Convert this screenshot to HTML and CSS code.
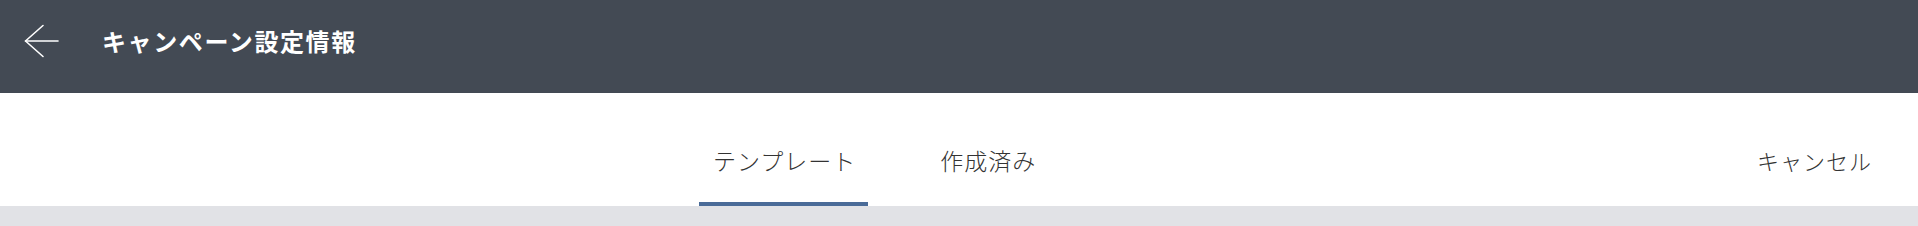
FILE: index.html
```html
<!DOCTYPE html>
<html lang="ja">
<head>
    <meta charset="UTF-8">
    <meta name="viewport" content="width=device-width, initial-scale=1.0">
    <title>キャンペーン設定情報</title>
    <link rel="stylesheet" href="styles.css">
</head>
<body>
    <div class="header">
        <button class="back-button" aria-label="戻る">
            <svg width="36" height="34" viewBox="0 0 36 34" fill="none" stroke="#fff" stroke-width="1.6" stroke-linecap="round" stroke-linejoin="round">
                <path d="M1.5 17 H34"/>
                <path d="M19 1.5 L1.5 17 L19 32.5"/>
            </svg>
        </button>
        <div class="title">キャンペーン設定情報</div>
    </div>
    <div class="tab-bar">
        <div class="tabs">
            <div class="tab active">テンプレート</div>
            <div class="tab">作成済み</div>
        </div>
        <div class="cancel">キャンセル</div>
    </div>
</body>
</html>
```

FILE: styles.css
```css
body {
    margin: 0;
    background-color: #e1e2e6;
    font-family: "Noto Sans CJK JP", "Noto Sans", sans-serif;
    color: #333;
}
.header {
    display: flex;
    align-items: center;
    height: 93px;
    box-sizing: border-box;
    padding: 0 0 12px 24px;
    background-color: #434a54;
}
.back-button {
    display: flex;
    padding: 0;
    border: none;
    background: none;
    cursor: pointer;
}
.title {
    margin-left: 42px;
    font-size: 24px;
    font-weight: bold;
    letter-spacing: 1.6px;
    color: #fff;
}
.tab-bar {
    display: flex;
    align-items: flex-end;
    height: 113px;
    padding: 0 46px 0 699px;
    background-color: #fff;
    box-shadow: 0 1px 2px rgba(0, 0, 0, 0.12);
}
.tabs {
    display: flex;
    gap: 58px;
}
.tab {
    padding: 0 12px 26px 14px;
    line-height: 32px;
    font-size: 23px;
    font-weight: 300;
    letter-spacing: 1px;
    border-bottom: 4px solid transparent;
    cursor: pointer;
}
.tab.active {
    border-bottom-color: #4a6b98;
}
.cancel {
    margin-left: auto;
    padding-bottom: 30px;
    line-height: 32px;
    font-size: 22px;
    font-weight: 300;
    letter-spacing: 1px;
    cursor: pointer;
}
```
